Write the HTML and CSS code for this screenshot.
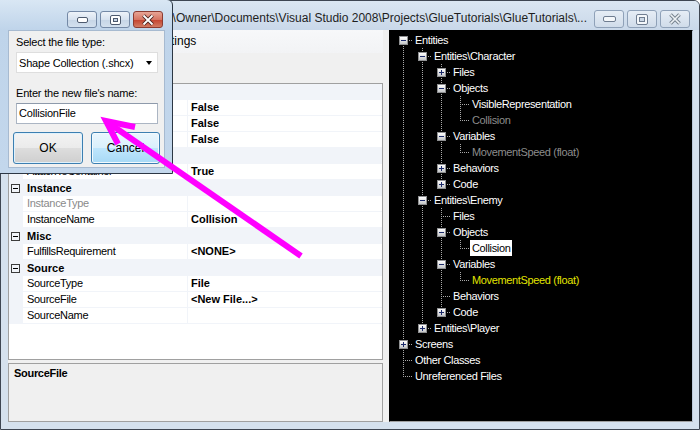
FILE: index.html
```html
<!DOCTYPE html>
<html>
<head>
<meta charset="utf-8">
<link rel="stylesheet" href="styles.css">
</head>
<body>
<div class="win">
  <div class="titlebar">
    <div class="title"><span>\Owner\Documents\Visual Studio 2008\Projects\GlueTutorials\GlueTutorials\...</span></div>
    <div class="caps">
      <div class="cap"><svg width="13" height="6" viewBox="0 0 13 6"><rect x="0.5" y="0.5" width="12" height="5" rx="1.5" fill="#f4f7fa" stroke="#6f7d90"/></svg></div>
      <div class="cap"><svg width="12" height="11" viewBox="0 0 12 11"><rect x="0.5" y="0.5" width="11" height="10" rx="1.5" fill="#f4f7fa" stroke="#6f7d90"/><rect x="3.5" y="3.5" width="5" height="4" fill="#cbd7e5" stroke="#6f7d90"/></svg></div>
      <div class="cap"><svg width="14" height="12" viewBox="0 0 14 12"><path d="M2.5 1.5l9 9M11.5 1.5l-9 9" stroke="#76838f" stroke-width="3.6" fill="none"/><path d="M2.5 1.5l9 9M11.5 1.5l-9 9" stroke="#eef2f6" stroke-width="1.6" fill="none"/></svg></div>
    </div>
  </div>
  <div class="client">
    <div class="left">
      <div class="menubar"><span class="mi">Settings</span></div>
      <div class="toolbar"></div>
      <div class="grid">
        <div class="row cat"><span class="mg"><i class="cb"></i></span><span class="cn"></span></div>
        <div class="row"><span class="mg"></span><span class="nm"></span><span class="vl">False</span></div>
        <div class="row"><span class="mg"></span><span class="nm"></span><span class="vl">False</span></div>
        <div class="row"><span class="mg"></span><span class="nm"></span><span class="vl">False</span></div>
        <div class="row cat"><span class="mg"><i class="cb"></i></span><span class="cn"></span></div>
        <div class="row"><span class="mg"></span><span class="nm">AttachToContainer</span><span class="vl">True</span></div>
        <div class="row cat"><span class="mg"><i class="cb"></i></span><span class="cn">Instance</span></div>
        <div class="row"><span class="mg"></span><span class="nm ro">InstanceType</span><span class="vl"></span></div>
        <div class="row"><span class="mg"></span><span class="nm">InstanceName</span><span class="vl">Collision</span></div>
        <div class="row cat"><span class="mg"><i class="cb"></i></span><span class="cn">Misc</span></div>
        <div class="row"><span class="mg"></span><span class="nm">FulfillsRequirement</span><span class="vl">&lt;NONE&gt;</span></div>
        <div class="row cat"><span class="mg"><i class="cb"></i></span><span class="cn">Source</span></div>
        <div class="row"><span class="mg"></span><span class="nm">SourceType</span><span class="vl">File</span></div>
        <div class="row"><span class="mg"></span><span class="nm">SourceFile</span><span class="vl">&lt;New File...&gt;</span></div>
        <div class="row"><span class="mg"></span><span class="nm">SourceName</span><span class="vl"></span></div>
      </div>
      <div class="desc"><span class="dname">SourceFile</span></div>
    </div>
    <div class="split"></div>
    <div class="tree">
      <div class="tr"><i class="g r"><b class="bx"></b></i><span class="tx">Entities</span></div>
      <div class="tr"><i class="g v"></i><i class="g t"><b class="bx"></b></i><span class="tx">Entities\Character</span></div>
      <div class="tr"><i class="g v"></i><i class="g v"></i><i class="g t"><b class="bx p"></b></i><span class="tx">Files</span></div>
      <div class="tr"><i class="g v"></i><i class="g v"></i><i class="g t"><b class="bx"></b></i><span class="tx">Objects</span></div>
      <div class="tr"><i class="g v"></i><i class="g v"></i><i class="g v"></i><i class="g t"></i><span class="tx">VisibleRepresentation</span></div>
      <div class="tr"><i class="g v"></i><i class="g v"></i><i class="g v"></i><i class="g l"></i><span class="tx dim">Collision</span></div>
      <div class="tr"><i class="g v"></i><i class="g v"></i><i class="g t"><b class="bx"></b></i><span class="tx">Variables</span></div>
      <div class="tr"><i class="g v"></i><i class="g v"></i><i class="g v"></i><i class="g l"></i><span class="tx dim">MovementSpeed (float)</span></div>
      <div class="tr"><i class="g v"></i><i class="g v"></i><i class="g t"><b class="bx p"></b></i><span class="tx">Behaviors</span></div>
      <div class="tr"><i class="g v"></i><i class="g v"></i><i class="g l"><b class="bx p"></b></i><span class="tx">Code</span></div>
      <div class="tr"><i class="g v"></i><i class="g t"><b class="bx"></b></i><span class="tx">Entities\Enemy</span></div>
      <div class="tr"><i class="g v"></i><i class="g v"></i><i class="g t"></i><span class="tx">Files</span></div>
      <div class="tr"><i class="g v"></i><i class="g v"></i><i class="g t"><b class="bx"></b></i><span class="tx">Objects</span></div>
      <div class="tr"><i class="g v"></i><i class="g v"></i><i class="g v"></i><i class="g l"></i><span class="tx sel">Collision</span></div>
      <div class="tr"><i class="g v"></i><i class="g v"></i><i class="g t"><b class="bx"></b></i><span class="tx">Variables</span></div>
      <div class="tr"><i class="g v"></i><i class="g v"></i><i class="g v"></i><i class="g l"></i><span class="tx yel">MovementSpeed (float)</span></div>
      <div class="tr"><i class="g v"></i><i class="g v"></i><i class="g t"></i><span class="tx">Behaviors</span></div>
      <div class="tr"><i class="g v"></i><i class="g v"></i><i class="g l"><b class="bx p"></b></i><span class="tx">Code</span></div>
      <div class="tr"><i class="g v"></i><i class="g l"><b class="bx p"></b></i><span class="tx">Entities\Player</span></div>
      <div class="tr"><i class="g t"><b class="bx p"></b></i><span class="tx">Screens</span></div>
      <div class="tr"><i class="g t"></i><span class="tx">Other Classes</span></div>
      <div class="tr"><i class="g l"></i><span class="tx">Unreferenced Files</span></div>
    </div>
  </div>
</div>

<div class="dlg">
  <div class="dtitle">
    <div class="dbtn"><svg width="11" height="6" viewBox="0 0 11 6"><rect x="0.5" y="0.5" width="10" height="5" rx="1.5" fill="#ffffff" stroke="#4d5a6e"/></svg></div>
    <div class="dbtn"><svg width="11" height="10" viewBox="0 0 11 10"><rect x="0.5" y="0.5" width="10" height="9" rx="1.5" fill="#ffffff" stroke="#4d5a6e"/><rect x="3.5" y="3.5" width="4" height="3" fill="#c6d4e4" stroke="#4d5a6e"/></svg></div>
    <div class="dbtn close"><svg width="14" height="12" viewBox="0 0 14 12"><path d="M2.5 1.5l9 9M11.5 1.5l-9 9" stroke="#4a2320" stroke-width="3.8" fill="none"/><path d="M2.5 1.5l9 9M11.5 1.5l-9 9" stroke="#ffffff" stroke-width="1.8" fill="none"/></svg></div>
  </div>
  <div class="dbody">
    <div class="lbl">Select the file type:</div>
    <div class="combo"><span>Shape Collection (.shcx)</span><i class="arr"></i></div>
    <div class="lbl lbl2">Enter the new file's name:</div>
    <div class="tbox">CollisionFile</div>
    <div class="btns">
      <div class="btn ok">OK</div>
      <div class="btn hov">Cancel</div>
    </div>
  </div>
</div>

<svg class="arrow" width="700" height="430" viewBox="0 0 700 430">
  <path d="M301 256 L110 124" stroke="#ff00ff" stroke-width="6" fill="none"/>
  <polyline points="135,127 106,121 118,144" stroke="#ff00ff" stroke-width="6" fill="none" stroke-linejoin="miter"/>
</svg>
</body>
</html>
```

FILE: styles.css
```css
:root {
  --line: #f1f4f9;
  --dv: repeating-linear-gradient(to bottom, #a8a8a8 0 1px, transparent 1px 2px);
  --dh: repeating-linear-gradient(to right, #a8a8a8 0 1px, transparent 1px 2px);
}

body {
  margin: 0;
  width: 700px;
  height: 430px;
  overflow: hidden;
  position: relative;
  font-family: "Liberation Sans", Arial, sans-serif;
  color: #000;
}

.win {
  width: 700px;
  height: 430px;
  box-sizing: border-box;
  border: 1px solid #3e4652;
  border-radius: 0 6px 0 0;
  background: #d5e1ee;
  display: flex;
  flex-direction: column;
}

.titlebar {
  height: 29px;
  flex: none;
  display: flex;
  background: linear-gradient(#dbe6f2, #c9d8e9);
  border-radius: 0 5px 0 0;
}

.title {
  flex: 1;
  display: flex;
  justify-content: flex-end;
  overflow: hidden;
  padding: 10px 7px 0 0;
  font-size: 12px;
  line-height: 14px;
  color: #1e1e1e;
  white-space: nowrap;
}

.title span { flex: none; }

.caps {
  display: flex;
  gap: 3px;
  padding: 9px 9px 0 0;
}

.cap {
  width: 30px;
  height: 18px;
  box-sizing: border-box;
  border: 1px solid #8fa1b8;
  border-radius: 3px;
  background: linear-gradient(#e6edf5, #d0dcea);
  display: flex;
  align-items: center;
  justify-content: center;
}

.client {
  flex: 1;
  display: flex;
  margin: 0 6px 7px 7px;
}

.left {
  width: 375px;
  flex: none;
  display: flex;
  flex-direction: column;
  background: #f0f0f0;
}

.menubar {
  height: 23px;
  flex: none;
  display: flex;
  background: linear-gradient(#f7f8fa, #f2f3f5);
  font-size: 12px;
  line-height: 23px;
  padding-left: 145px;
}

.toolbar { height: 30px; flex: none; }

.grid {
  height: 277px;
  flex: none;
  box-sizing: border-box;
  border: 1px solid #a0a0a0;
  background: #fff;
}

.row {
  display: flex;
  height: 16px;
  font-size: 11px;
  line-height: 15px;
  white-space: nowrap;
}

.row.cat { background: var(--line); }

.mg {
  width: 14px;
  flex: none;
  box-sizing: border-box;
  background: var(--line);
  padding: 4px 0 0 2px;
}

.cb {
  display: block;
  width: 9px;
  height: 9px;
  box-sizing: border-box;
  border: 1px solid #3c3c3c;
  background: linear-gradient(#000, #000) 1px 3px / 5px 1px no-repeat;
}

.cn {
  font-weight: bold;
  padding-left: 4px;
  line-height: 16px;
}

.nm {
  width: 165px;
  flex: none;
  box-sizing: border-box;
  border-right: 1px solid var(--line);
  border-bottom: 1px solid var(--line);
  padding-left: 4px;
  letter-spacing: -0.3px;
  overflow: hidden;
}

.nm.ro { color: #8a8a8a; }

.vl {
  flex: 1;
  border-bottom: 1px solid var(--line);
  padding-left: 3px;
  font-weight: bold;
}

.desc {
  height: 59px;
  flex: none;
  box-sizing: border-box;
  margin-top: 3px;
  border: 1px solid #a0a0a0;
  background: #f0f0f0;
  padding: 2px 0 0 5px;
  font-size: 11px;
  line-height: 15px;
}

.dname { font-weight: bold; letter-spacing: -0.3px; }

.split { width: 6px; flex: none; background: #f0f0f0; }

.tree {
  width: 304px;
  flex: none;
  box-sizing: border-box;
  background: #000;
  border-style: solid;
  border-width: 1px;
  border-color: #000 #bccadb #a0a0a0 #000;
  padding: 1px 0 0 4px;
  font-size: 11px;
  color: #fff;
}

.tr {
  display: flex;
  height: 16px;
  line-height: 16px;
  white-space: nowrap;
}

.g {
  width: 19px;
  height: 16px;
  flex: none;
  box-sizing: border-box;
  padding: 4px 0 0 5px;
}

.g.v { background: var(--dv) 9px 0 / 1px 16px no-repeat; }
.g.t { background: var(--dv) 9px 0 / 1px 16px no-repeat, var(--dh) 11px 8px / 8px 1px no-repeat; }
.g.l { background: var(--dv) 9px 0 / 1px 9px no-repeat, var(--dh) 11px 8px / 8px 1px no-repeat; }
.g.r { background: var(--dv) 9px 8px / 1px 8px no-repeat, var(--dh) 11px 8px / 8px 1px no-repeat; }

.bx {
  display: block;
  width: 9px;
  height: 9px;
  box-sizing: border-box;
  border: 1px solid #8f9092;
  background:
    linear-gradient(#1b2a6b, #1b2a6b) 1px 3px / 5px 1px no-repeat,
    linear-gradient(#ffffff, #c4c6c8);
}

.bx.p {
  background:
    linear-gradient(#1b2a6b, #1b2a6b) 1px 3px / 5px 1px no-repeat,
    linear-gradient(#1b2a6b, #1b2a6b) 3px 1px / 1px 5px no-repeat,
    linear-gradient(#ffffff, #c4c6c8);
}

.tx {
  padding: 0 2px;
  letter-spacing: -0.35px;
}

.tx.dim { color: #8c8c8c; }
.tx.yel { color: #e2e400; }
.tx.sel { background: #fff; color: #000; }

/* dialog */
.dlg {
  position: absolute;
  left: -1px;
  top: -1px;
  width: 174px;
  height: 175px;
  box-sizing: border-box;
  border: 1px solid #2c3744;
  border-radius: 0 6px 0 0;
  background: linear-gradient(#d9e7f4, #bfd4ea 30px, #c3d7ec);
  padding: 0 7px 5px 8px;
  display: flex;
  flex-direction: column;
}

.dtitle {
  height: 30px;
  flex: none;
  box-sizing: border-box;
  display: flex;
  justify-content: flex-end;
  gap: 3px;
  padding: 11px 2px 0 0;
}

.dbtn {
  width: 30px;
  height: 17px;
  box-sizing: border-box;
  border: 1px solid #7489a6;
  border-radius: 3px;
  background: linear-gradient(#eef3f9, #d7e2ef 50%, #c6d5e6 51%, #d3e0ee);
  display: flex;
  align-items: center;
  justify-content: center;
}

.dbtn.close {
  border-color: #8c3b31;
  background: linear-gradient(#e7a596, #d67563 50%, #c4412d 51%, #d27b63);
}

.dbody {
  flex: 1;
  background: #f0f0f0;
  border: 1px solid #a7bad0;
  display: flex;
  flex-direction: column;
  padding: 4px 0 0 7px;
  font-size: 11px;
  letter-spacing: -0.2px;
}

.lbl { line-height: 14px; height: 14px; }
.lbl2 { margin-top: 13px; }

.combo {
  margin-top: 3px;
  width: 142px;
  height: 21px;
  box-sizing: border-box;
  border: 1px solid #dedede;
  background: #fff;
  display: flex;
  align-items: center;
  justify-content: space-between;
  padding: 0 5px 0 2px;
}

.arr {
  width: 0;
  height: 0;
  border-left: 3.5px solid transparent;
  border-right: 3.5px solid transparent;
  border-top: 4px solid #000;
}

.tbox {
  margin-top: 3px;
  width: 142px;
  height: 21px;
  box-sizing: border-box;
  border: 1px solid #abb5c3;
  border-top-color: #8e9aab;
  background: #fff;
  padding-left: 2px;
  line-height: 19px;
}

.btns {
  margin: 8px 0 0 -3px;
  display: flex;
  gap: 8px;
}

.btn {
  height: 32px;
  box-sizing: border-box;
  border: 1px solid #3c7fb1;
  border-radius: 3px;
  display: flex;
  align-items: center;
  justify-content: center;
  font-size: 12px;
  letter-spacing: 0;
  box-shadow: inset 0 0 0 1px #dff1fc;
}

.btn.ok {
  width: 70px;
  background: linear-gradient(#f3f3f3, #ebebeb 50%, #dddddd 51%, #cfcfcf);
}

.btn.hov {
  width: 69px;
  box-shadow: inset 0 0 0 1px #f2fafe;
  background: linear-gradient(#eaf6fd, #d9f0fc 50%, #bee6fd 51%, #a7d9f5);
}

.arrow {
  position: absolute;
  left: 0;
  top: 0;
  pointer-events: none;
}
```
